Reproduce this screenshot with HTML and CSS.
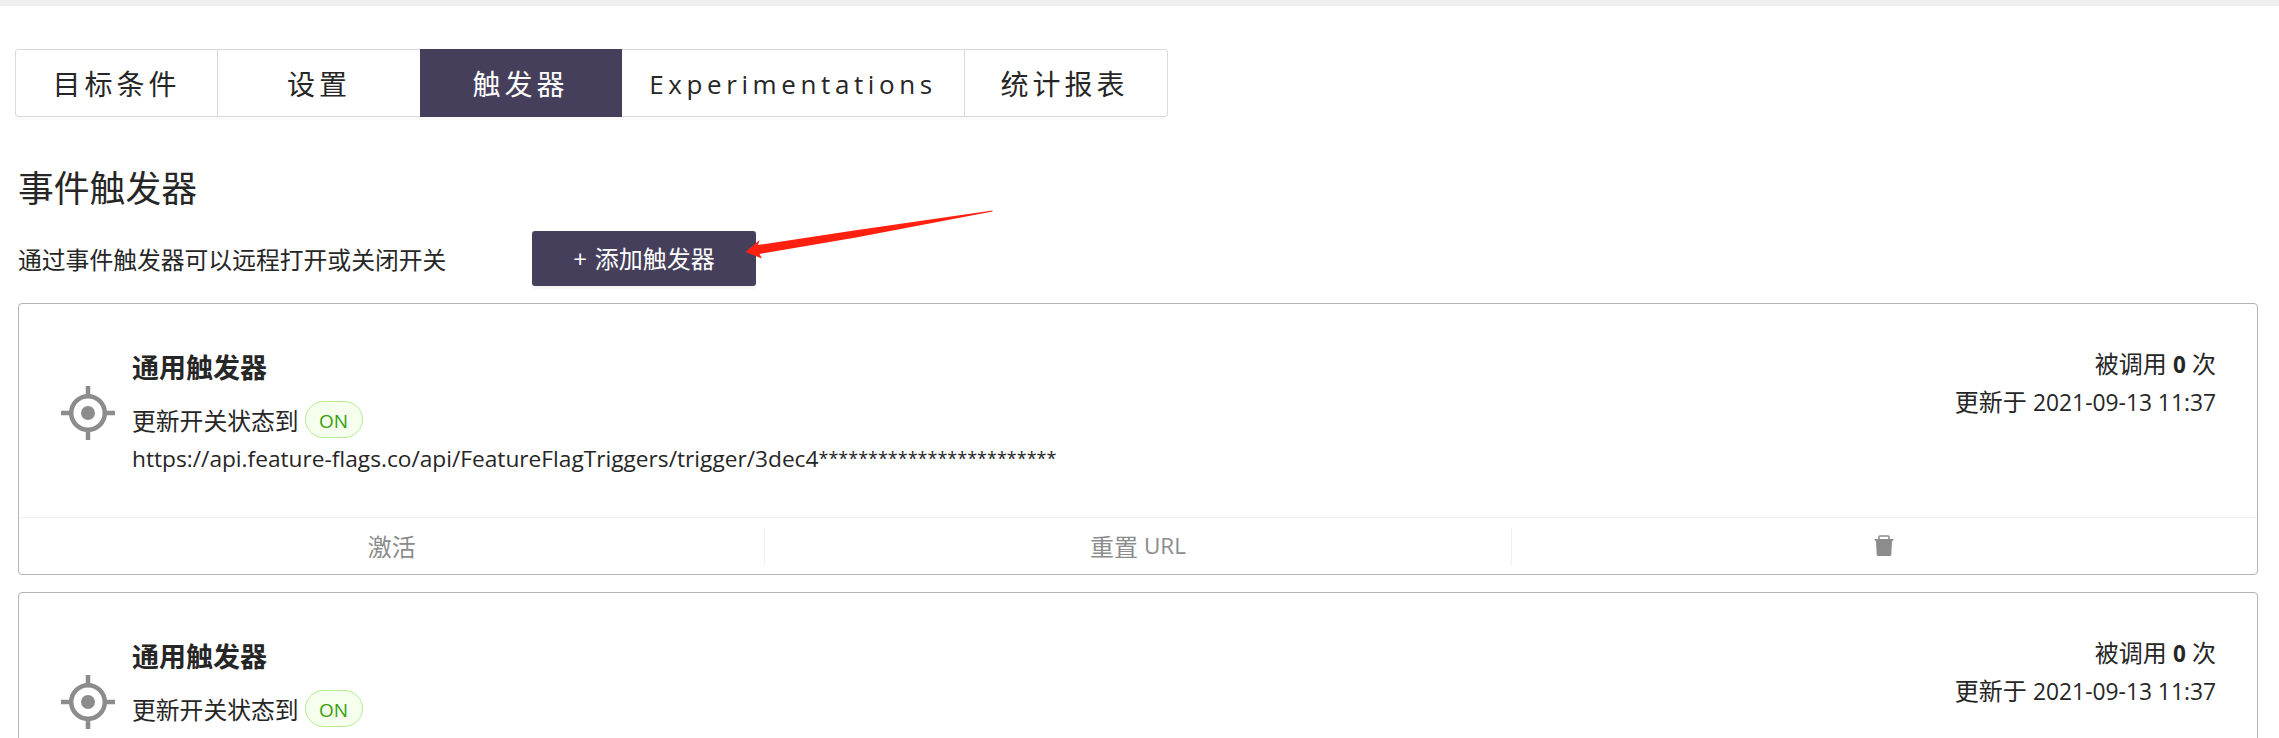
FILE: index.html
```html
<!DOCTYPE html>
<html lang="zh-CN">
<head>
<meta charset="utf-8">
<title>事件触发器</title>
<link rel="stylesheet" href="styles.css">
</head>
<body>
<main class="page">
  <nav class="tabs">
    <a class="tab">目标条件</a>
    <a class="tab">设置</a>
    <a class="tab tab-active">触发器</a>
    <a class="tab tab-wide">Experimentations</a>
    <a class="tab tab-last">统计报表</a>
  </nav>
  <h1 class="title">事件触发器</h1>
  <div class="intro">
    <span class="intro-text">通过事件触发器可以远程打开或关闭开关</span>
    <button class="add"><span class="plus">+</span>添加触发器</button>
    <svg class="arrow" width="252" height="52" viewBox="0 0 252 52"><path d="M1.5 43L15.5 31L14 36L110 21.5L248.500 1.500V2.500L112 28.500L15.500 45L18 49.500Z" fill="#ff2010"/></svg>
  </div>

  <section class="card">
    <div class="card-body">
      <svg class="aim" width="54" height="54" viewBox="0 0 54 54"><circle cx="27" cy="27" r="16.8" fill="none" stroke="#8c8c8c" stroke-width="4.5"/><circle cx="27" cy="27" r="7" fill="#8c8c8c"/><path d="M27 0V9M27 45V54M0 27H9M45 27H54" stroke="#8c8c8c" stroke-width="4.5"/></svg>
      <div class="info">
        <h2 class="name">通用触发器</h2>
        <div class="state">更新开关状态到<span class="tag">ON</span></div>
        <div class="url"><span class="path">https://api.feature-flags.co/api/FeatureFlagTriggers/trigger/3dec4</span><span class="mask">************************</span></div>
      </div>
      <div class="meta">
        <div>被调用 <b>0</b> 次</div>
        <div>更新于 <span class="date">2021-09-13 11:37</span></div>
      </div>
    </div>
    <div class="actions">
      <a class="action">激活</a>
      <a class="action">重置 <span class="latin">URL</span></a>
      <a class="action"><svg class="trash" width="20" height="22" viewBox="0 0 20 22"><path d="M5 4V1.8Q5 1 5.8 1H14.2Q15 1 15 1.8V4" fill="none" stroke="#8c8c8c" stroke-width="1.6"/><path d="M1.2 4H18.8Q19.6 4 19.6 4.8V5.8H18L17.3 19.8Q17.2 21 16 21H4Q2.8 21 2.7 19.8L2 5.8H.4V4.8Q.4 4 1.2 4Z" fill="#8c8c8c"/></svg></a>
    </div>
  </section>

  <section class="card">
    <div class="card-body">
      <svg class="aim" width="54" height="54" viewBox="0 0 54 54"><circle cx="27" cy="27" r="16.8" fill="none" stroke="#8c8c8c" stroke-width="4.5"/><circle cx="27" cy="27" r="7" fill="#8c8c8c"/><path d="M27 0V9M27 45V54M0 27H9M45 27H54" stroke="#8c8c8c" stroke-width="4.5"/></svg>
      <div class="info">
        <h2 class="name">通用触发器</h2>
        <div class="state">更新开关状态到<span class="tag">ON</span></div>
      </div>
      <div class="meta">
        <div>被调用 <b>0</b> 次</div>
        <div>更新于 <span class="date">2021-09-13 11:37</span></div>
      </div>
    </div>
  </section>
</main>
</body>
</html>
```

FILE: styles.css
```css
* { box-sizing: border-box; }
body {
  margin: 0;
  height: 738px;
  overflow: hidden;
  background: #fff;
  color: #262626;
  font-family: "Open Sans", "Noto Sans CJK SC", sans-serif;
  font-size: 24px;
}
.page {
  height: 738px;
  overflow: hidden;
  border-top: 6px solid #f0f0f0;
  padding: 43px 21px 0 18px;
}
.tabs {
  display: flex;
  width: 1153px;
  height: 68px;
  margin-left: -3px;
  border: 1px solid #d9d9d9;
  border-radius: 3px;
  box-shadow: 0 3px 0 rgba(0, 0, 0, .02);
}
.tab {
  width: 202px;
  height: 66px;
  line-height: 68px;
  text-align: center;
  font-size: 28px;
  letter-spacing: 4px;
  white-space: nowrap;
  border-right: 1px solid #d9d9d9;
}
.tab-active {
  height: 68px;
  margin-top: -1px;
  line-height: 70px;
  background: #463f5c;
  border-color: #463f5c;
  color: #fff;
}
.tab:nth-child(2) { border-right: 0; }
.tab-wide { width: 343px; font-size: 26px; letter-spacing: 4.6px; }
.tab-last { width: 202px; border-right: 0; padding-right: 3px; }
.title {
  margin: 50px 0 0;
  font-size: 35.8px;
  font-weight: 400;
  line-height: 42px;
}
.intro {
  position: relative;
  display: flex;
  align-items: center;
  height: 55px;
  margin-top: 22px;
}
.intro-text { width: 514px; font-size: 23.8px; white-space: nowrap; }
.add {
  width: 224px;
  height: 55px;
  padding: 0;
  border: 0;
  border-radius: 3px;
  background: #463f5c;
  color: #fff;
  font: inherit;
  line-height: 56px;
  box-shadow: 0 3px 0 rgba(0, 0, 0, .04);
}
.plus { margin-right: 8px; }
.arrow { position: absolute; left: 726px; top: -22px; }
.card {
  height: 272px;
  margin-top: 17px;
  border: 1px solid #b3b3b3;
  border-radius: 4px;
}
.card-body {
  display: flex;
  height: 213px;
  padding: 42px 42px 0;
}
.aim { margin: 40px 17px 0 0; }
.info { flex: 1; }
.name {
  margin: 0;
  font-size: 27px;
  font-weight: 700;
  line-height: 44px;
}
.state {
  display: flex;
  align-items: center;
  height: 40px;
  margin-top: 9px;
  margin-bottom: 2px;
  font-size: 23.8px;
}
.tag {
  width: 58px;
  height: 37px;
  margin-left: 6px;
  border: 1px solid #b7eb8f;
  border-radius: 19px;
  background: #f6ffed;
  color: #389e0d;
  font-size: 19px;
  line-height: 38px;
  text-align: center;
}
.url {
  height: 36px;
  line-height: 36px;
  font-size: 22.7px;
  white-space: nowrap;
}
.mask { font-size: 18px; vertical-align: 2px; line-height: 1; }
.meta { line-height: 37px; text-align: right; margin-top: -1px; margin-right: -1px; }
.meta b { font-size: 22.5px; }
.date { font-size: 22.8px; }
.actions {
  display: flex;
  align-items: center;
  height: 57px;
  border-top: 1px solid #f0f0f0;
}
.action {
  display: flex;
  flex: 1;
  justify-content: center;
  align-items: center;
  gap: 6px;
  height: 37px;
  padding-bottom: 2px;
  border-right: 1px solid #f0f0f0;
  color: #8c8c8c;
}
.action:last-child { border-right: 0; padding-bottom: 0; }
.latin { font-size: 22.5px; }
```
